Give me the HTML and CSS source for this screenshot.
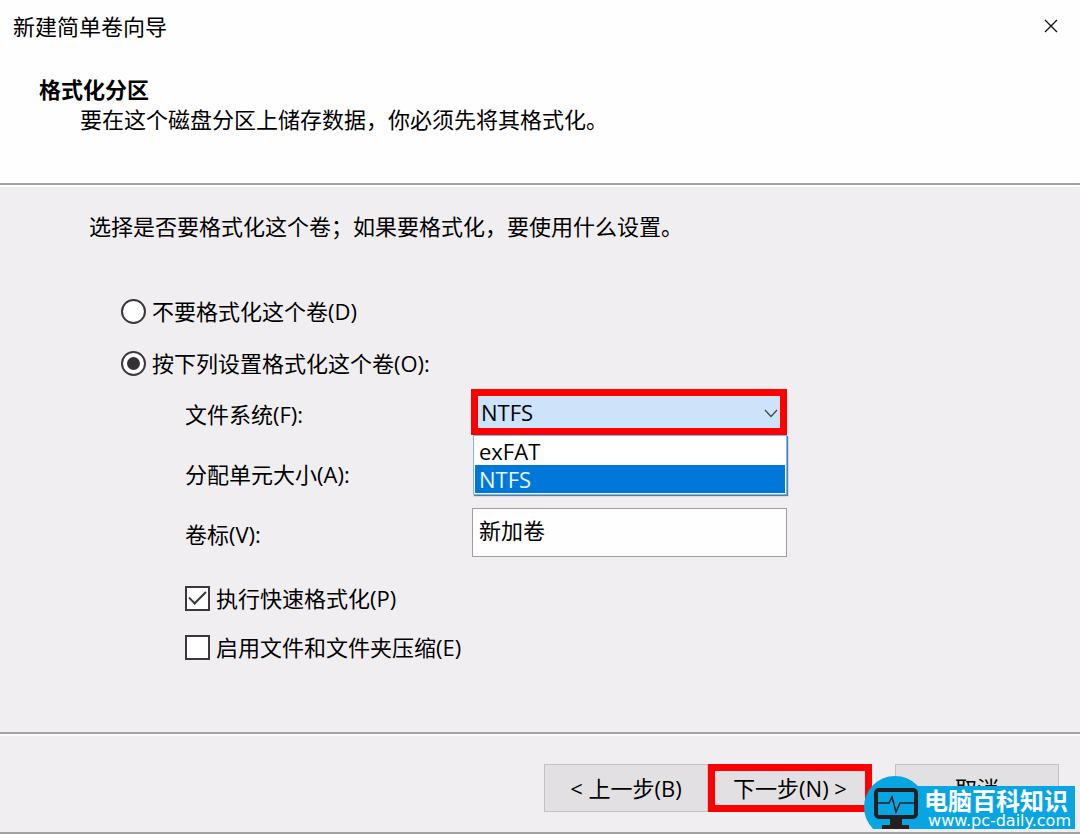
FILE: index.html
```
<!DOCTYPE html>
<html lang="zh-CN">
<head>
  <meta charset="UTF-8" />
  <title>新建简单卷向导</title>
  <meta name="viewport" content="width=device-width, initial-scale=1.0" />
  <link rel="stylesheet" href="styles.css">
</head>
<body>
  <header class="header">
    <div class="titlebar">
      <span>新建简单卷向导</span>
      <button class="close" type="button" aria-label="关闭">
        <svg width="14" height="14" viewBox="0 0 14 14"><path d="M1 1L13 13M13 1L1 13" stroke="#111" stroke-width="1.3" fill="none"/></svg>
      </button>
    </div>
    <h1>格式化分区</h1>
    <p>要在这个磁盘分区上储存数据，你必须先将其格式化。</p>
  </header>

  <main class="content">
    <p class="intro">选择是否要格式化这个卷；如果要格式化，要使用什么设置。</p>

    <label class="option radio"><input type="radio" name="format" /> <span>不要格式化这个卷(D)</span></label>
    <label class="option radio"><input type="radio" name="format" checked /> <span>按下列设置格式化这个卷(O):</span></label>

    <div class="settings">
      <label for="fs">文件系统(F):</label>
      <div class="combo">
        <select id="fs">
          <option>exFAT</option>
          <option selected>NTFS</option>
        </select>
        <svg class="arrow" width="14" height="9" viewBox="0 0 14 9"><path d="M1 1L7 7.500L13 1" stroke="#444" stroke-width="1.2" fill="none"/></svg>
        <ul class="list" role="listbox" aria-label="文件系统">
          <li role="option">exFAT</li>
          <li role="option" class="selected" aria-selected="true">NTFS</li>
        </ul>
      </div>

      <span class="name">分配单元大小(A):</span>
      <span></span>

      <label for="volume">卷标(V):</label>
      <input type="text" id="volume" value="新加卷" />
    </div>

    <div class="checks">
      <label class="option"><input type="checkbox" checked /> <span>执行快速格式化(P)</span></label>
      <label class="option"><input type="checkbox" /> <span>启用文件和文件夹压缩(E)</span></label>
    </div>
  </main>

  <footer class="footer">
    <button type="button">&lt; 上一步(B)</button>
    <button type="button" class="next">下一步(N) &gt;</button>
    <button type="button" class="cancel">取消</button>
  </footer>

  <div class="badge">
    <svg width="64" height="53" viewBox="0 0 64 53">
      <circle cx="31" cy="31" r="31" fill="#08a5e3"/>
      <rect x="12" y="14" width="40" height="27" rx="3" fill="#08a5e3" stroke="#231f20" stroke-width="4"/>
      <path d="M14 27H25L28 21L32 36L36 27H50" stroke="#231f20" stroke-width="1.500" fill="none"/>
      <path d="M26 42H38V49H45V53H18V49H26Z" fill="#231f20"/>
    </svg>
    <div class="badge-text">
      <strong>电脑百科知识</strong>
      <span>www.pc-daily.com</span>
    </div>
  </div>
</body>
</html>
```
FILE: styles.css
```
* {
  box-sizing: border-box;
}

body {
  margin: 0;
  min-height: 100vh;
  display: flex;
  flex-direction: column;
  position: relative;
  background: #f0eef0;
  color: #000;
  border-bottom: 2px solid #a3a1a3;
  font-family: "Open Sans", "Noto Sans CJK SC", sans-serif;
  font-size: 22px;
  line-height: 30px;
}

h1, p, ul {
  margin: 0;
  padding: 0;
}

button, input, select {
  font: inherit;
  color: inherit;
}

.header {
  background: #fefefe;
  height: 185px;
  border-bottom: 2px solid #a3a1a3;
}

.titlebar {
  display: flex;
  justify-content: space-between;
  align-items: center;
  height: 52px;
  padding: 0 16px 0 13px;
}

.close {
  display: flex;
  padding: 6px;
  border: none;
  background: none;
}

.header h1 {
  padding: 22px 39px 0;
  font-size: 22px;
  font-weight: bold;
}

.header p {
  padding-left: 80px;
}

.content {
  flex: 1;
  border-top: 2px solid #fff;
  padding: 24px 89px;
}

.intro {
  margin-bottom: 55px;
}

.option {
  display: flex;
  align-items: center;
  gap: 6px;
}

.option input {
  appearance: none;
  flex: none;
  display: grid;
  place-items: center;
  width: 25px;
  height: 25px;
  margin: 0;
  border: 2px solid #3a383a;
  background: #fff;
}

.radio {
  margin: 0 0 22px 32px;
}

.radio input {
  border-radius: 50%;
}

.radio input:checked::before {
  content: "";
  width: 13px;
  height: 13px;
  border-radius: 50%;
  background: #333133;
}

.checks input:checked::before {
  content: "";
  width: 15px;
  height: 7px;
  border-left: 2px solid #3a383a;
  border-bottom: 2px solid #3a383a;
  transform: translateY(-3px) rotate(-45deg);
}

.settings {
  display: grid;
  grid-template-columns: 287px 315px;
  grid-auto-rows: 60px;
  align-items: center;
  margin: -18px 0 0 96px;
}

.settings > label,
.settings .name {
  padding-top: 4px;
}

.combo {
  position: relative;
  margin-left: -1px;
}

.combo select {
  appearance: none;
  display: block;
  width: 100%;
  height: 46px;
  padding: 0 3px;
  border: 7px solid #fe0000;
  border-radius: 0;
  background: #cce3f9;
}

.arrow {
  position: absolute;
  right: 9px;
  top: 20px;
}

.list {
  position: absolute;
  top: 46px;
  left: 2px;
  right: 0;
  border: 1px solid #7db8e6;
  background: #fff;
  box-shadow: 1px 1px 1px #527ea0;
  list-style: none;
  padding: 1px;
  line-height: 28px;
}

.list li {
  padding: 0 4px;
}

.list .selected {
  background: #0078d9;
  color: #e8f8ff;
}

#volume {
  width: 100%;
  height: 49px;
  padding: 0 6px 6px;
  border: 1px solid #a09ea0;
  background: #fefefe;
}

.checks {
  display: flex;
  flex-direction: column;
  gap: 19px;
  margin: 21px 0 0 96px;
}

.footer {
  display: flex;
  justify-content: flex-end;
  border-top: 2px solid #a3a1a3;
  padding: 30px 21px 20px;
  box-shadow: inset 0 2px #fbfafb;
}

.footer button {
  width: 164px;
  height: 48px;
  padding: 0;
  border: 1px solid #c2c0c2;
  background: #e2e0e2;
}

.footer .next {
  border: 7px solid #fe0000;
}

.footer .cancel {
  margin-left: 23px;
}

.badge {
  position: absolute;
  right: 5px;
  bottom: 3px;
  display: flex;
  align-items: flex-end;
  color: #fff;
}

.badge svg {
  position: relative;
  z-index: 1;
}

.badge-text {
  display: flex;
  flex-direction: column;
  height: 43px;
  margin-left: -18px;
  padding: 0 4px 0 14px;
  background: #08a5e3;
}

.badge strong {
  font-family: "Noto Sans CJK SC", sans-serif;
  font-size: 24px;
  line-height: 28px;
}

.badge span {
  padding-left: 4px;
  font-family: "DejaVu Sans", sans-serif;
  font-size: 16px;
  line-height: 14px;
}
```
